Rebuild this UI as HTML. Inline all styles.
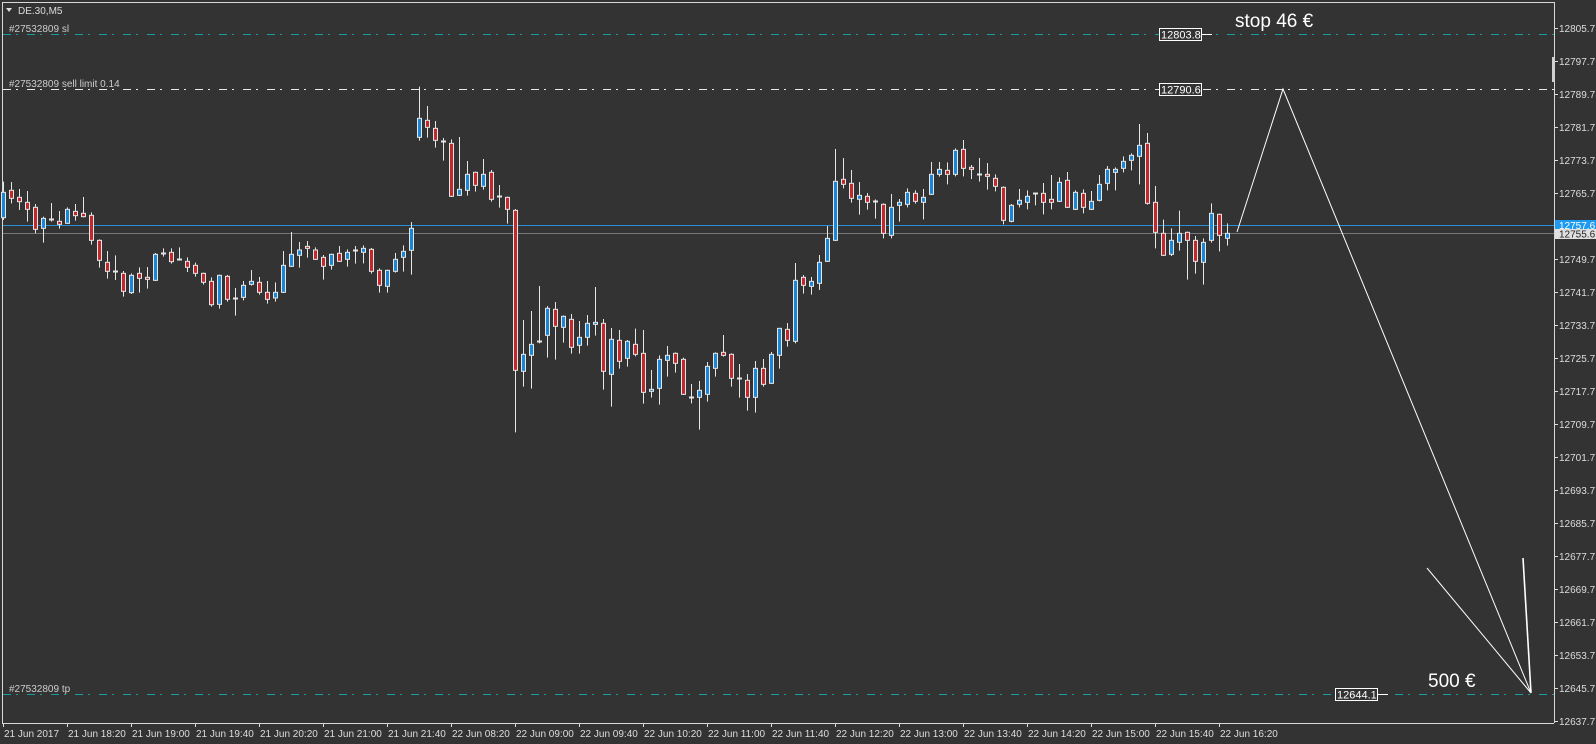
<!DOCTYPE html>
<html><head><meta charset="utf-8"><style>
html,body{margin:0;padding:0;background:#333333;width:1596px;height:744px;overflow:hidden}
svg{display:block}
text{font-family:"Liberation Sans",sans-serif}
</style></head><body>
<svg id="s" width="1596" height="744" xmlns="http://www.w3.org/2000/svg">
<rect width="1596" height="744" fill="#333333"/>
<g id="lines">
<line x1="2" y1="2.5" x2="1554" y2="2.5" stroke="#d8d8d8"/>
<line x1="2.5" y1="2" x2="2.5" y2="723" stroke="#d8d8d8"/>
<line x1="1554.5" y1="2" x2="1554.5" y2="723" stroke="#d8d8d8"/>
<line x1="2" y1="723.5" x2="1554" y2="723.5" stroke="#d8d8d8"/>
<rect x="1552" y="57" width="3" height="25" fill="#d0d0d0"/>
<line x1="3" y1="34.5" x2="1554" y2="34.5" stroke="#1a9c9c" stroke-dasharray="8 5 2 9"/>
<line x1="3" y1="89.5" x2="1554" y2="89.5" stroke="#e8e8e8" stroke-dasharray="8 5 2 9"/>
<line x1="3" y1="694.5" x2="1554" y2="694.5" stroke="#1a9c9c" stroke-dasharray="8 5 2 9"/>
<line x1="3" y1="225.5" x2="1554" y2="225.5" stroke="#2a8fd8"/>
<line x1="3" y1="233.5" x2="1554" y2="233.5" stroke="#777"/>
</g>
<g id="candles"></g>
<g fill="none" stroke="#fff" stroke-width="1">
<polyline points="1237,232 1283,89 1531,693"/>
<line x1="1427" y1="568" x2="1531" y2="693"/>
<line x1="1523" y1="558" x2="1531" y2="693" stroke-width="1.6"/>
</g>
<polygon points="6,8 12,8 9,12" fill="#ddd"/>
<text x="18" y="14" font-size="10" fill="#ddd">DE.30,M5</text>
<text x="9" y="32" font-size="10" fill="#ccc">#27532809 sl</text>
<text x="9" y="87" font-size="10" fill="#ccc">#27532809 sell limit 0.14</text>
<text x="9" y="692" font-size="10" fill="#ccc">#27532809 tp</text>
<text x="1235" y="27" font-size="19" fill="#fff">stop 46 €</text>
<text x="1428" y="687" font-size="19" fill="#fff">500 €</text>
<g font-size="11" fill="#fff">
<line x1="1202" y1="34.5" x2="1212" y2="34.5" stroke="#fff"/>
<rect x="1159.5" y="28.5" width="42" height="12" fill="#333" stroke="#fff"/>
<text x="1161" y="38.5">12803.8</text>
<rect x="1159.5" y="83.5" width="42" height="12" fill="#333" stroke="#fff"/>
<text x="1161" y="93.5">12790.6</text>
<line x1="1378" y1="694.5" x2="1388" y2="694.5" stroke="#fff"/>
<rect x="1335.5" y="688.5" width="42" height="12" fill="#333" stroke="#fff"/>
<text x="1337" y="698.5">12644.1</text>
</g>
<rect x="1555" y="220" width="41" height="9" fill="#1e9bf0"/>
<text x="1559" y="229" font-size="10" fill="#fff">12757.6</text>
<rect x="1555" y="229" width="41" height="10" fill="#e0e0e0"/>
<text x="1559" y="237.5" font-size="10" fill="#222">12755.6</text>
<g id="axis" font-size="10" fill="#ddd"></g>
</svg>
<script>
var C=[
[160,[[97,173,65,180,'b'],[91,115,66,130,'r'],[112,125,87,150,'r'],[127,148,93,185,'r'],[142,208,132,220,'r'],[175,205,170,248,'b'],[176,176,129,185,'d'],[184,193,153,206,'r'],[148,190,142,192,'b'],[154,167,132,182,'r'],[160,170,111,172,'r'],[166,241,157,254,'r'],[241,301,238,323,'r'],[307,334,273,356,'r'],[334,334,286,360,'d'],[340,394,333,410,'r'],[346,398,340,402,'b'],[340,355,322,398,'r'],[352,358,321,386,'r'],[283,361,279,363,'b'],[280,280,265,290,'d'],[277,305,265,311,'r'],[298,298,262,302,'d'],[304,322,292,336,'r'],[316,340,308,350,'r'],[340,367,338,374,'r'],[364,434,352,440,'r'],[346,433,344,446,'b'],[349,418,345,425,'r'],[414,414,384,467,'d'],[376,412,363,421,'b'],[364,373,330,377,'b'],[367,397,351,404,'r'],[397,418,363,431,'r'],[397,414,367,425,'b'],[316,397,273,399,'b'],[283,319,216,321,'b'],[270,286,246,323,'b'],[259,265,243,293,'r'],[270,298,262,300,'r'],[292,319,285,359,'r'],[283,316,281,329,'b'],[280,304,258,306,'r'],[277,298,268,320,'b'],[271,271,258,311,'d'],[265,277,256,310,'b'],[268,334,264,341,'r'],[331,376,325,398,'r'],[331,379,329,398,'b'],[298,334,279,338,'b'],[274,292,256,335,'b'],[205,271,186,344,'b']]],
[80,[[115,172,20,182,'b'],[121,142,78,173,'r'],[145,181,123,203,'r'],[184,184,174,242,'d'],[190,349,178,351,'r'],[328,346,171,348,'b'],[283,331,243,347,'b'],[277,316,275,335,'r'],[283,319,237,329,'b'],[277,358,270,365,'r'],[347,347,315,383,'d'],[352,388,350,431,'r'],[391,871,387,1057,'r'],[823,874,720,920,'b'],[793,826,693,926,'b'],[782,782,618,790,'d'],[685,766,678,833,'b'],[688,739,666,839,'r'],[709,742,706,788,'b'],[718,802,702,821,'r'],[772,796,723,821,'b'],[730,772,705,797,'b'],[727,733,621,767,'b'],[730,874,717,929,'r'],[778,883,744,980,'b'],[781,844,750,866,'r'],[784,835,780,860,'b'],[793,823,746,829,'r'],[820,937,750,971,'r'],[928,934,870,953,'b'],[838,925,826,974,'b'],[826,841,798,890,'b'],[820,850,817,878,'r'],[838,943,833,945,'r'],[950,950,912,970,'d'],[931,952,903,1049,'b'],[859,943,846,965,'b'],[820,865,817,890,'b'],[817,826,765,830,'r'],[823,895,820,920,'r'],[893,893,852,953,'d'],[901,952,882,992,'r'],[865,952,843,998,'b'],[865,913,837,920,'r'],[823,910,816,912,'b'],[745,826,745,866,'b'],[748,781,729,800,'r'],[601,784,549,790,'b'],[592,616,585,641,'r'],[604,619,591,644,'b']]],
[120,[[427,490,405,510,'b'],[355,424,318,426,'b'],[184,361,87,363,'b'],[178,193,114,205,'r'],[190,235,150,248,'r'],[226,238,186,284,'b'],[229,247,219,269,'r'],[244,244,238,296,'d'],[253,340,250,355,'r'],[262,346,222,355,'b'],[247,256,237,305,'b'],[217,253,205,262,'b'],[220,244,211,251,'r'],[232,247,207,298,'b'],[163,223,126,225,'b'],[148,163,126,170,'b'],[151,163,127,193,'r'],[91,163,85,169,'b'],[88,145,60,169,'r'],[142,148,135,177,'r'],[163,163,114,185,'d'],[163,169,129,209,'r'],[175,199,163,214,'r'],[202,301,199,313,'r'],[256,304,252,307,'b'],[241,253,207,262,'b'],[229,247,211,268,'b'],[220,220,220,256,'d'],[220,247,189,283,'r'],[238,247,165,268,'r'],[187,244,172,246,'b'],[181,262,156,264,'r'],[217,268,211,270,'b'],[220,262,208,280,'r'],[244,268,213,270,'b'],[193,241,165,244,'b'],[148,190,138,211,'b'],[148,157,142,211,'b'],[124,145,109,157,'b'],[106,121,100,151,'b'],[76,109,12,193,'b'],[70,250,39,254,'r'],[247,337,198,385,'r'],[340,406,299,408,'r'],[361,403,325,408,'b'],[340,367,272,392,'b'],[337,361,335,479,'r'],[361,424,348,461,'r'],[367,427,355,494,'b'],[280,361,250,368,'b'],[283,346,281,394,'r'],[340,355,310,377,'b']]]
];
var h='',k=0;
C.forEach(function(g){var o=g[0];g[1].forEach(function(c){
 var x=3+8*k,t=o+c[0]/3,b=o+c[1]/3,wt=o+c[2]/3,wb=o+c[3]/3;
 h+='<line x1="'+(x+.5)+'" y1="'+wt+'" x2="'+(x+.5)+'" y2="'+wb+'" stroke="#e6e6e6"/>';
 if(c[4]=='d'){h+='<rect x="'+(x-2)+'" y="'+(Math.round(t)-0.5)+'" width="5" height="2" fill="#e6e6e6"/>';}
 else{var hh=Math.max(b-t,2);h+='<rect x="'+(x-1.5)+'" y="'+t+'" width="4" height="'+hh+'" fill="'+(c[4]=='b'?'#1a86d8':'#c1272d')+'" stroke="#e6e6e6" stroke-width="1"/>';}
 k++;});});
document.getElementById('candles').innerHTML=h;
var a='',p=['12805.7','12797.7','12789.7','12781.7','12773.7','12765.7','12757.7','12749.7','12741.7','12733.7','12725.7','12717.7','12709.7','12701.7','12693.7','12685.7','12677.7','12669.7','12661.7','12653.7','12645.7','12637.7'];
p.forEach(function(v,i){var y=28+33*i;if(i==6)return;a+='<line x1="1555" y1="'+(y+.5)+'" x2="1558" y2="'+(y+.5)+'" stroke="#ddd"/><text x="1559" y="'+(y+4)+'">'+v+'</text>';});
var L=['21 Jun 2017','21 Jun 18:20','21 Jun 19:00','21 Jun 19:40','21 Jun 20:20','21 Jun 21:00','21 Jun 21:40','22 Jun 08:20','22 Jun 09:00','22 Jun 09:40','22 Jun 10:20','22 Jun 11:00','22 Jun 11:40','22 Jun 12:20','22 Jun 13:00','22 Jun 13:40','22 Jun 14:20','22 Jun 15:00','22 Jun 15:40','22 Jun 16:20'];
L.forEach(function(v,i){var x=3+64*i;a+='<line x1="'+(x+.5)+'" y1="723" x2="'+(x+.5)+'" y2="727" stroke="#ddd"/><text x="'+(x+1)+'" y="737">'+v+'</text>';});
document.getElementById('axis').innerHTML=a;
</script>
</body></html>
